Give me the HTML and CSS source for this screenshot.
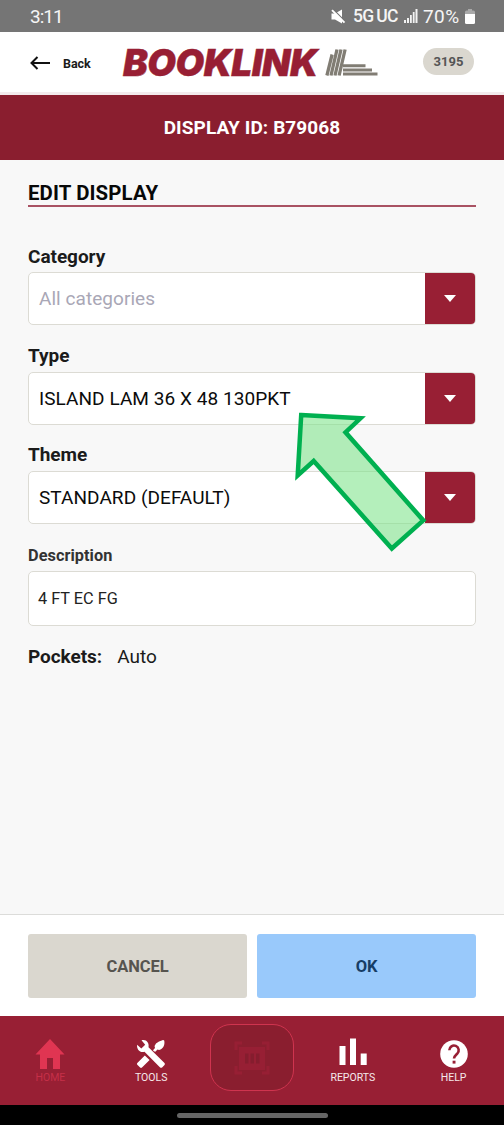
FILE: index.html
```html
<!DOCTYPE html>
<html lang="en">
<head>
<meta charset="utf-8">
<title>Booklink - Edit Display</title>
<link rel="stylesheet" href="styles.css">
</head>
<body>
<div class="screen">
  <div class="status">
    <span class="time">3:11</span>
    <svg class="mute" width="15" height="15" viewBox="0 0 15 15"><path d="M0.500 4.500h3.500L11 .5v14L4 10.500H.5z" fill="#fff"/><path d="M2 .2l13 13" stroke="#757575" stroke-width="1.300"/><path d="M1 1.200l12.500 12.500" stroke="#fff" stroke-width="1.900"/></svg>
    <span class="net">5G<span class="uc">UC</span></span>
    <svg class="signal" width="14" height="14" viewBox="0 0 14 14" fill="#f2f2f2"><path d="M0 11h2v3H0zM3 9h2v5H3zM6 6h1.800v8H6zM8.800 3h1.800v11H8.800zM11.500 0h2v14h-2z"/></svg>
    <span class="percent">70%</span>
    <svg class="battery" width="10" height="15" viewBox="0 0 10 15"><path d="M3 0h4v1.500h1.500Q10 1.500 10 3v3H0V3q0-1.500 1.500-1.500H3z" fill="#a9a9a9"/><path d="M0 5h10v8.500q0 1.500-1.500 1.500h-7Q0 15 0 13.500z" fill="#fff"/></svg>
  </div>
  <header class="header">
    <svg class="back-icon" width="20" height="14" viewBox="0 0 20 14" fill="none" stroke="#111" stroke-width="2"><path d="M20 7H2M7.500 1L1.500 7l6 6"/></svg>
    <span class="back">Back</span>
    <span class="logo">BOOKLINK</span>
    <svg class="books" width="53" height="27" viewBox="0 0 53 27"><g fill="none" stroke="#817d74" stroke-width="3.300"><path d="M1.900 26.500L7.100 5.500M6 26.500L12 .5M10 26.500L16 .5M14.100 26.500L20.100 .5"/><path d="M18 16.800h22.500M18 20.900h29M18 25h34.500" stroke-width="3"/></g></svg>
    <span class="badge">3195</span>
  </header>
  <div class="banner">DISPLAY ID: B79068</div>
  <main class="content">
    <h1 class="title"><span>EDIT DISPLAY</span></h1>
    <label class="label label-category">Category</label>
    <div class="select"><span class="value placeholder">All categories</span><span class="drop"><i class="caret"></i></span></div>
    <label class="label">Type</label>
    <div class="select"><span class="value v-type">ISLAND LAM 36 X 48 130PKT</span><span class="drop"><i class="caret"></i></span></div>
    <label class="label label-theme">Theme</label>
    <div class="select"><span class="value v-theme">STANDARD (DEFAULT)</span><span class="drop"><i class="caret"></i></span></div>
    <label class="label label-small">Description</label>
    <div class="input">4 FT EC FG</div>
    <div class="pockets"><b>Pockets:</b><span>Auto</span></div>
  </main>
  <div class="actions"><div class="btn cancel">CANCEL</div><div class="btn ok">OK</div></div>
  <nav class="nav">
    <div class="tab home"><svg width="30" height="32" viewBox="0 0 30 32"><path d="M15 1L0.500 16.500H5V31h7V20h6v11h7V16.500h4.500z" fill="#e03552"/></svg><span>HOME</span></div>
    <div class="tab"><svg width="30" height="32" viewBox="0 0 30 32" fill="#fff"><path d="M5.500 2.200C10 .8 13.500 4.500 12.500 9.200L28.500 25q.9 1 0 2l-2.400 2.400q-1 .9-2 0L8.500 13.700C4 15 .5 11.500 1.100 6.700l4.200 3.700 3.900-3.700z"/><path d="M1.300 24.900l7.500-7.500 4.800 4.700-7.600 7.400q-1 .8-1.900 0l-2.800-2.700q-.8-.9 0-1.900zM17 12.300L19 10q-1-2.500 1-4.500Q22.500 3.200 27 2q1 0 1.300.8.800 5-2.300 7.800-2.200 2-4.500 1l-2.200 2.200q-1.700-.2-2.300-1.500z"/></svg><span>TOOLS</span></div>
    <div class="scan"><svg width="36" height="34" viewBox="0 0 36 34"><g fill="none" stroke="#971f34" stroke-width="3"><path d="M2 9V2h6M28 2h6v7M34 25v7h-6M8 32H2v-7"/></g><path d="M5 6h26v23H5z" fill="#971f34"/><path d="M11 12.500h3.500v10H11zM16.500 12.500H20v10h-3.500zM22 12.500h3.500v10H22z" fill="#851d2e"/></svg></div>
    <div class="tab"><svg width="30" height="32" viewBox="0 0 30 32" fill="#fff"><path d="M1.500 8h6v19h-6zM12 .5h6V27h-6zM22.700 15.500h6V27h-6z"/></svg><span>REPORTS</span></div>
    <div class="tab"><svg width="30" height="32" viewBox="0 0 30 32"><circle cx="15" cy="16" r="13.800" fill="#fff"/><path d="M10.300 12.200a4.700 4.700 0 1 1 8 3.400c-2 1.900-3.300 2.600-3.300 5" fill="none" stroke="#981f34" stroke-width="2.600"/><path d="M13.600 22.700h2.900v2.900h-2.900z" fill="#981f34"/></svg><span>HELP</span></div>
  </nav>
  <div class="gesture"><span class="pill"></span></div>
  <svg class="pointer" width="140" height="150" viewBox="290 405 140 150"><path d="M301.200 415L360.500 418.300L345.500 432.300L423.300 520.400L391.800 548.500L313.700 461L297.700 475.500Z" fill="#7de38a" fill-opacity=".58" stroke="#00b050" stroke-width="4.500"/></svg>
</div>
</body>
</html>
```
FILE: styles.css
```css
* { box-sizing: border-box; }
body { margin: 0; font-family: Roboto, sans-serif; color: #1b1b1b; }
.screen { position: relative; width: 504px; height: 1125px; display: flex; flex-direction: column; background: #f8f8f8; overflow: hidden; }
.status { height: 32px; flex: none; background: #757575; color: #f5f5f5; display: flex; align-items: center; padding: 0 29px 0 30px; font-size: 19px; white-space: nowrap; }
.time { flex: 1; letter-spacing: -1px; }
.mute { margin-right: 7px; }
.net { font-size: 17.500px; font-weight: 500; letter-spacing: -.8px; width: 51px; }
.uc { margin-left: 3px; }
.signal { margin-right: 5px; }
.percent { letter-spacing: .4px; width: 42px; }
.battery { flex: none; }
.header { height: 63px; flex: none; background: #fff; display: flex; align-items: center; padding-left: 30px; border-bottom: 3px solid #f3eaec; }
.back-icon { margin-top: 2px; }
.back { font-size: 12.500px; font-weight: 700; letter-spacing: -.1px; width: 60px; margin: 3px 0 0 13px; line-height: 20px; }
.logo { font: italic 900 37px/40px Inter, sans-serif; color: #981f34; -webkit-text-stroke: .4px #981f34; width: 202px; letter-spacing: -.5px; margin-top: 1px; }
.books { flex: none; margin-top: 1px; }
.badge { width: 51px; height: 27px; margin-left: 45px; margin-top: -2px; border-radius: 14px; background: #dad7cf; color: #555; font-size: 13px; font-weight: 700; letter-spacing: .1px; line-height: 27px; text-align: center; }
.banner { height: 65px; flex: none; background: #8a1e2f; color: #fff; font-size: 19px; font-weight: 700; letter-spacing: .1px; line-height: 66px; text-align: center; }
.content { height: 754px; flex: none; padding: 20px 28px 0; display: flex; flex-direction: column; }
.title { margin: 0; height: 27px; flex: none; border-bottom: 2px solid #a95263; font-size: 20.400px; line-height: 26px; font-weight: 700; letter-spacing: .12px; color: #080808; }
.label { height: 24px; flex: none; font-size: 19px; line-height: 24px; font-weight: 700; letter-spacing: -.05px; margin: 19px 0 4px; }
.label-category { margin: 38px 0 3px; }
.label-theme { margin: 18px 0 4px; }
.label-small { font-size: 16.300px; letter-spacing: .05px; color: #333; margin: 20px 0 3px; }
.select { height: 53px; flex: none; display: flex; border: 1.500px solid #dcdbd4; border-radius: 5px; background: #fff; overflow: hidden; }
.value { flex: 1; padding-left: 10px; font-size: 19px; line-height: 51px; color: #0b0b0b; }
.v-type, .v-theme { letter-spacing: .06px; }
.placeholder { color: #a9a7b6; letter-spacing: .05px; }
.drop { width: 50px; background: #981f34; display: flex; align-items: center; justify-content: center; }
.caret { border: solid transparent; border-width: 7px 6.500px 0; border-top-color: #fff; }
.input { height: 55px; flex: none; border: 1.500px solid #dcdbd4; border-radius: 5px; background: #fff; padding-left: 9px; font-size: 16.300px; line-height: 54px; color: #222; }
.pockets { display: flex; gap: 15px; margin-top: 19px; font-size: 19px; line-height: 24px; }
.pockets b { font-weight: 700; letter-spacing: -.05px; }
.actions { height: 102px; flex: none; border-top: 1.500px solid #dcdcda; background: #fff; padding: 19px 28px; display: flex; gap: 10px; }
.btn { flex: 1; height: 64px; border-radius: 3px; font-size: 16.500px; font-weight: 700; letter-spacing: -.1px; line-height: 65px; text-align: center; }
.cancel { background: #dad7cf; color: #56544f; }
.ok { background: #99c9fb; color: #173d65; }
.nav { height: 89px; flex: none; background: #981f34; display: grid; grid-template-columns: repeat(5, 1fr); justify-items: center; }
.tab { display: flex; flex-direction: column; align-items: center; padding-top: 22px; color: #f5e9eb; font-size: 10.500px; line-height: 15px; }
.home { color: #c52f48; }
.scan { width: 84px; height: 67px; margin-top: 8px; border: 1.500px solid #cf344f; border-radius: 21px; background: #8a1e2f; display: flex; align-items: center; justify-content: center; }
.gesture { height: 20px; flex: none; background: #000; padding-top: 8px; }
.pill { display: block; width: 151px; height: 5px; margin: 0 auto; border-radius: 3px; background: #656565; }
/* Highlight arrow laid over the form */
.pointer { position: absolute; left: 290px; top: 405px; }
```
